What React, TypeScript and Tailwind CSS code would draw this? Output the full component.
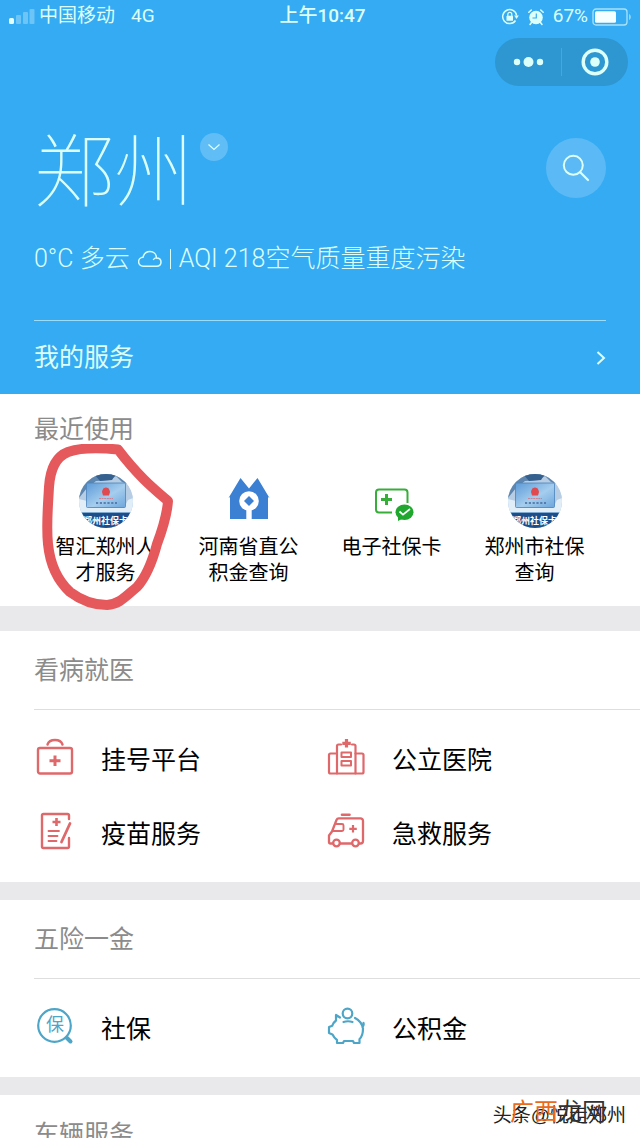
import React from "react";

type IconProps = { className?: string };

const line = {
  fill: "none",
  stroke: "currentColor",
  strokeWidth: 2.4,
  strokeLinecap: "round" as const,
  strokeLinejoin: "round" as const,
};

function Signal() {
  return (
    <svg className="h-4 w-[26px]" viewBox="0 0 26 16" aria-hidden="true">
      <rect x="0" y="9" width="5" height="6" rx="1.5" fill="#e4fffb" />
      <rect x="7" y="6" width="5" height="9" rx="1" fill="#6cc4f7" />
      <rect x="14" y="3" width="5" height="12" rx="1" fill="#6cc4f7" />
      <rect x="20.500" y="0" width="5" height="15" rx="1" fill="#6cc4f7" />
    </svg>
  );
}

function RotationLock() {
  return (
    <svg className="h-[18px] w-[18px]" viewBox="0 0 18 18" aria-hidden="true">
      <path d="M14.500 12.500A7 7 0 1 1 15.600 7.500" fill="none" stroke="currentColor" strokeWidth="1.500" />
      <path d="M13.200 7.500h4.600L15.500 11z" fill="currentColor" />
      <rect x="5.500" y="7.800" width="6.500" height="5" rx=".6" fill="currentColor" />
      <path d="M6.800 8V6.400a2 2 0 0 1 4 0V8" fill="none" stroke="currentColor" strokeWidth="1.200" />
    </svg>
  );
}

function Alarm() {
  return (
    <svg className="h-[18px] w-[18px]" viewBox="0 0 18 18" aria-hidden="true">
      <circle cx="9" cy="9.500" r="6.800" fill="currentColor" />
      <path d="M1.800 4.300 4.300 2M16.200 4.300 13.700 2M4.500 14.500 3 16.500M13.500 14.500l1.500 2" stroke="currentColor" strokeWidth="1.500" strokeLinecap="round" />
      <path d="M9.300 5.500v4.500H5.500" fill="none" stroke="#35abf3" strokeWidth="1.200" />
    </svg>
  );
}

function Battery() {
  return (
    <svg className="h-[18px] w-10" viewBox="0 0 40 18" aria-hidden="true">
      <rect x="1" y="1" width="34" height="16" rx="3" fill="none" stroke="#a8e2f8" strokeWidth="1.300" />
      <rect x="3" y="3.200" width="21" height="11.600" rx="1.500" fill="#f4ffff" />
      <path d="M37 6c2.500 1 2.500 5 0 6z" fill="#8fd5f8" />
    </svg>
  );
}

function Cloud() {
  return (
    <svg className="h-[18px] w-6" viewBox="0 0 24 18" aria-hidden="true">
      <path d="M5.200 16.300a4.500 4.500 0 0 1-.2-9C5.800 4 8.600 1.500 12 1.500c3.600 0 6.300 2.600 6.500 6.400 2.600 0 4.500 1.700 4.500 4.200s-1.900 4.200-4.500 4.200z" fill="none" stroke="currentColor" strokeWidth="1.500" strokeLinejoin="round" />
      <path d="M15.500 9.500c.6-1 1.700-1.600 3-1.600" fill="none" stroke="currentColor" strokeWidth="1.400" strokeLinecap="round" />
    </svg>
  );
}

function CardPhoto() {
  return (
    <span className="relative block h-[54px] w-[54px] overflow-hidden rounded-full bg-[#c5dcef]">
      <svg className="h-full w-full" viewBox="0 0 54 54" aria-hidden="true">
        <defs>
          <linearGradient id="card" x1="0" y1="0" x2="1" y2="1">
            <stop offset="0" stopColor="#5d9bd8" />
            <stop offset=".55" stopColor="#a5cdee" />
            <stop offset="1" stopColor="#6ca6dc" />
          </linearGradient>
        </defs>
        <rect width="54" height="54" fill="#b6cde3" />
        <path d="M0 0h54v12L43 8 37 2 31 6 17 7 8 14 0 24z" fill="#5e86ae" />
        <path d="M15 0h22l-4 6-12 1z" fill="#36618f" />
        <path d="M0 25l8 2 4 7h33l4-8 5-2v16H0z" fill="#e1eef8" />
        <rect x="7.500" y="9" width="39" height="24.500" rx="1" fill="url(#card)" stroke="#4a84be" strokeWidth=".8" />
        <path d="M23 18c0-2 1.500-3 2-4.500.8 1 1.200.6 2-.5.700 1.100 1.200 1.500 2 .5.500 1.500 2 2.500 2 4.500l-1 3.500h-6z" fill="#e0494f" />
        <path d="M20 24.500h14" stroke="#d3798b" strokeWidth=".9" strokeDasharray="2 .6" />
        <path d="M17 29h21" stroke="#456a9c" strokeWidth="1.500" strokeDasharray="2.200 1.600" />
        <path d="M0 39h54v15H0z" fill="#1d4e8c" />
        <path d="M0 38.500h54" stroke="#7fa9d1" />
      </svg>
      <span className="absolute bottom-0 left-1/2 -translate-x-1/2 text-[9px] leading-[14px] font-bold whitespace-nowrap text-white">
        郑州社保卡
      </span>
    </span>
  );
}

function FundHouse() {
  return (
    <svg className="h-[54px] w-[54px]" viewBox="0 0 54 54" aria-hidden="true">
      <path d="M6.500 24 18.500 4l8.500 10.500L35.500 4l12 20-1.500-1v22H8V23z" fill="#3b80d2" />
      <circle cx="27" cy="27" r="9.800" fill="#fff" />
      <path d="M24.300 34h5.400v12h-5.400z" fill="#fff" />
      <path d="M27 22l5 5-5 5-5-5z" fill="#3b80d2" />
    </svg>
  );
}

function HealthCard() {
  return (
    <svg className="h-[54px] w-[54px]" viewBox="0 0 54 54" aria-hidden="true">
      <path d="M27 38.500H14a3 3 0 0 1-3-3v-17a3 3 0 0 1 3-3h25.500a3 3 0 0 1 3 3V29" fill="none" stroke="#38ae3a" strokeWidth="2" />
      <path d="M21.500 20v11M16 25.500h11" stroke="#38ae3a" strokeWidth="3" />
      <ellipse cx="39.500" cy="38.200" rx="9" ry="7.800" fill="#20a72d" />
      <path d="M33 42v5l5-2.500z" fill="#20a72d" />
      <path d="M34.500 37.500l3.500 3.200 7-5.700" fill="none" stroke="#fff" strokeWidth="1.700" />
    </svg>
  );
}

function FirstAid({ className }: IconProps) {
  return (
    <svg className={className} viewBox="0 0 38 38" aria-hidden="true">
      <g {...line}>
        <rect x="2" y="10" width="34" height="25.500" rx="2" />
        <path d="M11.500 6.500C12.500 3.500 15.500 2 19 2s6.500 1.500 7.500 4.500" />
        <path d="M19 17.500v10.500M13.500 22.800h11" strokeWidth="3" strokeLinecap="butt" />
      </g>
    </svg>
  );
}

function Hospital({ className }: IconProps) {
  return (
    <svg className={className} viewBox="0 0 38 38" aria-hidden="true">
      <g {...line} strokeWidth="2.200">
        <path d="M14 6.500h-2.500A1.500 1.500 0 0 0 10 8v27.500M25 6.500h2A1.500 1.500 0 0 1 28.500 8v27.500" />
        <path d="M10 15.500H3.500A1.500 1.500 0 0 0 2 17v17a1.500 1.500 0 0 0 1.500 1.500h31.500A1.500 1.500 0 0 0 36.500 34V17a1.500 1.500 0 0 0-1.500-1.500h-6.500" />
        <rect x="14.500" y="14.500" width="9.500" height="4.500" strokeWidth="2" />
        <rect x="14.500" y="23" width="9.500" height="4.500" strokeWidth="2" />
        <path d="M19.500 1v8.500M15.300 5.300h8.500" strokeWidth="3.200" strokeLinecap="butt" />
      </g>
    </svg>
  );
}

function Vaccine({ className }: IconProps) {
  return (
    <svg className={className} viewBox="0 0 38 38" aria-hidden="true">
      <g {...line}>
        <path d="M33 7V3.500A1.500 1.500 0 0 0 31.500 2h-24A1.500 1.500 0 0 0 6 3.500v31A1.500 1.500 0 0 0 7.500 36h24a1.500 1.500 0 0 0 1.500-1.500V26" />
        <path d="M34 11.500 25.500 30" strokeWidth="2.800" />
        <path d="M12.500 19H23M12.500 24h9M12.500 29h8" strokeWidth="1.800" />
        <path d="M20.500 6v8M16.500 10h8" strokeWidth="2.600" strokeLinecap="butt" />
      </g>
    </svg>
  );
}

function Ambulance({ className }: IconProps) {
  return (
    <svg className={className} viewBox="0 0 38 38" aria-hidden="true">
      <g {...line} strokeWidth="2.300">
        <path d="M5.500 31.500H3.500A1.500 1.500 0 0 1 2 30v-6.500l3-4L9.500 8a2.500 2.500 0 0 1 2.300-1.600H33.500A2.500 2.500 0 0 1 36 9v20a2.500 2.500 0 0 1-2.500 2.500H32M13 31.500h11.500" />
        <path d="M6 19h9a1.500 1.500 0 0 0 1.500-1.500v-4A1.500 1.500 0 0 0 15 12H9.500" strokeWidth="1.900" />
        <circle cx="9.500" cy="31" r="3.300" />
        <circle cx="28.500" cy="31" r="3.300" />
        <path d="M15 2.800h7.500" strokeWidth="2.600" />
        <path d="M26 13v7.500M22.300 16.800h7.500" strokeWidth="2.200" strokeLinecap="butt" />
      </g>
    </svg>
  );
}

function Insurance({ className }: IconProps) {
  return (
    <span className={`relative block ${className}`}>
      <svg className="h-full w-full" viewBox="0 0 38 38" aria-hidden="true">
        <circle cx="18.500" cy="18.500" r="16.300" fill="none" stroke="currentColor" strokeWidth="2.200" />
        <path d="m31 31 3.500 3.500" stroke="currentColor" strokeWidth="4" strokeLinecap="round" />
      </svg>
      <span className="absolute inset-x-0 top-0 text-center text-[18px] leading-9">保</span>
    </span>
  );
}

function Piggy({ className }: IconProps) {
  return (
    <svg className={className} viewBox="0 0 38 38" aria-hidden="true">
      <g {...line} strokeWidth="2.200">
        <circle cx="20.500" cy="6.500" r="4.800" />
        <path d="M16.500 15c3-1 6-1 9 0" />
        <path d="M13 10.500 9 8v5.500c-2 1.500-3 3-3.700 5.200L2 20v6l3.500 1.500C7 30.500 8.500 32 10 33v3h6l1-2h9l1 2h5.500v-4c3-2.500 3.500-5.500 3.500-10.500C35 16.500 32 13 28 11M35.500 20c1-1 1.500-2.300 1-4" />
      </g>
    </svg>
  );
}

const recent = [
  { label: "智汇郑州人才服务", Icon: CardPhoto },
  { label: "河南省直公积金查询", Icon: FundHouse },
  { label: "电子社保卡", Icon: HealthCard },
  { label: "郑州市社保查询", Icon: CardPhoto },
];

const sections = [
  {
    title: "看病就医",
    tone: "text-[#df686b]",
    items: [
      { label: "挂号平台", Icon: FirstAid },
      { label: "公立医院", Icon: Hospital },
      { label: "疫苗服务", Icon: Vaccine },
      { label: "急救服务", Icon: Ambulance },
    ],
  },
  {
    title: "五险一金",
    tone: "text-[#4da5c7]",
    items: [
      { label: "社保", Icon: Insurance },
      { label: "公积金", Icon: Piggy },
    ],
  },
  { title: "车辆服务", tone: "text-[#4da5c7]", items: [] },
];

function Header() {
  return (
    <header className="bg-[#35abf3] text-[#dcfffa]">
      <div className="grid h-8 grid-cols-3 items-center pt-px pr-2 pl-[9px] font-[Roboto,'Noto_Sans_CJK_SC',sans-serif] text-[19px]">
        <div className="flex items-center gap-1">
          <Signal />
          <span>中国移动</span>
          <span className="ml-3">4G</span>
        </div>
        <div className="pl-1 text-center font-medium">上午10:47</div>
        <div className="flex items-center justify-end gap-2">
          <RotationLock />
          <Alarm />
          <span className="flex items-center gap-1">
            67%
            <Battery />
          </span>
        </div>
      </div>

      <div className="flex justify-end pt-1.5 pr-3">
        <div className="flex h-12 w-[133px] items-center rounded-full bg-[#2e96d1]">
          <button aria-label="更多" className="flex h-full flex-1 items-center justify-center">
            <svg className="h-3 w-8" viewBox="0 0 32 12" fill="currentColor" aria-hidden="true">
              <circle cx="5" cy="6" r="3.200" />
              <circle cx="16.500" cy="6" r="5" />
              <circle cx="28" cy="6" r="3.200" />
            </svg>
          </button>
          <span className="h-7 w-px bg-[#4aa5d9]" />
          <button aria-label="关闭" className="flex h-full flex-1 items-center justify-center">
            <svg className="h-7 w-7" viewBox="0 0 28 28" aria-hidden="true">
              <circle cx="14" cy="14" r="11.800" fill="none" stroke="currentColor" strokeWidth="3.400" />
              <circle cx="14" cy="14" r="4.800" fill="currentColor" />
            </svg>
          </button>
        </div>
      </div>

      <div className="px-[34px]">
        <div className="flex items-start justify-between pt-[42px]">
          <div className="flex items-start gap-1.5">
            <h1 className="pt-[3px] text-[80px] leading-[84px] font-thin">郑州</h1>
            <button aria-label="切换城市" className="mt-[5px] flex h-7 w-7 items-center justify-center rounded-full bg-[#61bdf6]">
              <svg className="h-3 w-3" viewBox="0 0 12 12" aria-hidden="true">
                <path d="m.5 3.500 5.500 5 5.500-5" fill="none" stroke="currentColor" strokeWidth="1.200" />
              </svg>
            </button>
          </div>
          <button aria-label="搜索" className="mt-2.5 flex h-[60px] w-[60px] items-center justify-center rounded-full bg-[#5bbaf5]">
            <svg className="h-7 w-7" viewBox="0 0 28 28" aria-hidden="true">
              <circle cx="11.300" cy="11.300" r="9.500" fill="none" stroke="currentColor" strokeWidth="2" />
              <path d="m18.200 18.200 7.800 7.800" stroke="currentColor" strokeWidth="2.200" strokeLinecap="round" />
            </svg>
          </button>
        </div>
        <p className="mt-7 flex h-8 items-center font-[Roboto,'Noto_Sans_CJK_SC',sans-serif] text-[25px] font-light whitespace-nowrap">
          <span>0°C 多云</span>
          <span className="ml-2 flex items-center gap-2">
            <Cloud />
            <span className="h-5 w-px bg-current" />
            <span>AQI 218空气质量重度污染</span>
          </span>
        </p>
        <a href="#services" className="mt-[45px] flex h-[74px] items-center justify-between border-t border-[#9ddcf8] text-[25px]">
          <span>我的服务</span>
          <svg className="h-4 w-2.5" viewBox="0 0 10 16" aria-hidden="true">
            <path d="m1.500 2 6.500 6-6.500 6" fill="none" stroke="currentColor" strokeWidth="2" />
          </svg>
        </a>
      </div>
    </header>
  );
}

export default function App() {
  return (
    <div className="relative h-screen overflow-hidden bg-[#e9e8eb] font-['Liberation_Sans','Noto_Sans_CJK_SC',sans-serif] text-black">
      <Header />

      <main className="flex flex-col">
        <section className="relative mb-[25px] bg-white px-[34px] pt-5 pb-5">
          <h2 className="text-[25px] leading-[30px] text-[#8b8b8b]">最近使用</h2>
          <ul className="mt-[30px] grid grid-cols-4">
            {recent.map(({ label, Icon }) => (
              <li key={label}>
                <a href="#recent" className="flex flex-col items-center">
                  <Icon />
                  <span className="mt-1.5 w-[104px] text-center text-[20px] leading-[26px]">{label}</span>
                </a>
              </li>
            ))}
          </ul>
          <svg className="pointer-events-none absolute top-[50px] left-[38px] h-[168px] w-[140px]" viewBox="38 444 140 168" aria-hidden="true">
            <path d="M118 449.500C103 448 82 447 68 452c-13 5-18 20-19 35-1 20-3 38-1 57 2 20 9 36 22 48 12 9 25 13 37 13 13-1 19-9 30-18 10-11 16-28 20-43 6-16 10-28 11-43-14-12-29-24-50-51.500z" fill="none" stroke="#e5585c" strokeWidth="10" strokeLinejoin="round" />
          </svg>
        </section>

        {sections.map(({ title, tone, items }) => (
          <section key={title} className="mb-[18px] bg-white">
            <h2 className="ml-[34px] border-b border-[#dedede] py-6 text-[25px] leading-[30px] text-[#8b8b8b]">{title}</h2>
            <ul className="grid grid-cols-2 pt-3.5 pr-[22px] pb-2.5 pl-9">
              {items.map(({ label, Icon }) => (
                <li key={label}>
                  <a href="#services" className="flex h-[74px] items-center gap-[27px] text-[25px]">
                    <Icon className={`mb-2 h-[38px] w-[38px] shrink-0 ${tone}`} />
                    <span>{label}</span>
                  </a>
                </li>
              ))}
            </ul>
          </section>
        ))}
      </main>

      <div className="absolute right-3.5 bottom-2.5 h-7 w-[136px] whitespace-nowrap">
        <span className="absolute right-0 bottom-0 text-[19px] leading-6 text-[#222]">头条@悦走郑州</span>
        <span className="absolute bottom-0 left-5 text-[24px] leading-8 text-[#333]">
          <span className="text-[#ea6a20]">广西</span>龙网
        </span>
      </div>
    </div>
  );
}
